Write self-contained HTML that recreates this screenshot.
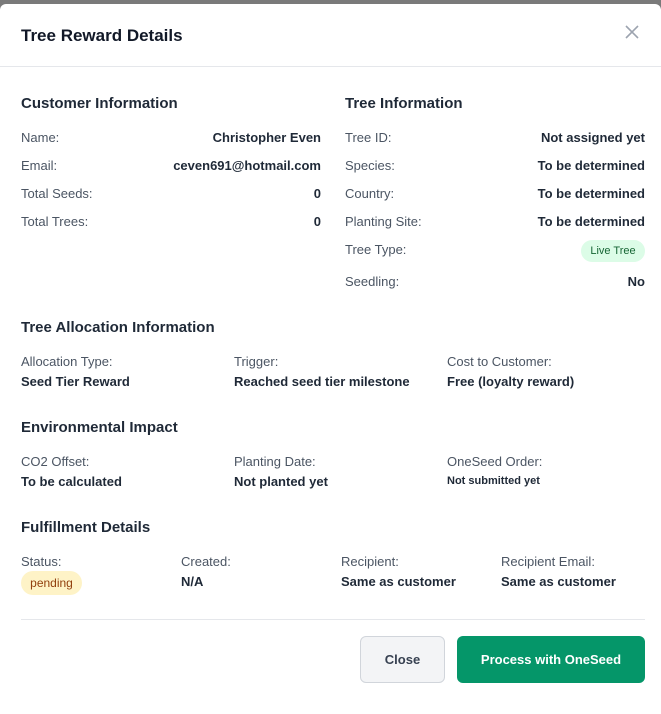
<!DOCTYPE html>
<html><head><style>
*{margin:0;padding:0;box-sizing:border-box}
body{width:661px;height:706px;background:#7a7a7a;font-family:"Liberation Sans",sans-serif;position:relative;overflow:hidden;color:#1f2937}
.m{position:absolute;left:0;top:4px;width:661px;height:710px;background:#fff;border-radius:6px 6px 0 0}
.a{position:absolute;white-space:nowrap}
.t{font-size:17px;font-weight:600;color:#111827}
.h{font-size:15px;font-weight:700;color:#1f2937}
.l{font-size:13px;color:#4b5563}
.v{font-size:13px;font-weight:700;color:#1f2937}
.r{text-align:right}
</style></head><body>
<div class="m"></div>
<div class="a t" style="left:21px;top:26px">Tree Reward Details</div>
<svg class="a" style="left:625px;top:25px" width="14" height="14" viewBox="0 0 14 14"><path d="M1 1L13 13M13 1L1 13" stroke="#9ca3af" stroke-width="1.6"/></svg>
<div class="a" style="left:0;top:66px;width:661px;height:1px;background:#e5e7eb"></div>

<div class="a h" style="left:21px;top:95px">Customer Information</div>
<div class="a h" style="left:345px;top:95px">Tree Information</div>

<div class="a l" style="left:21px;top:130px">Name:</div><div class="a v r" style="right:340px;top:130px">Christopher Even</div>
<div class="a l" style="left:21px;top:158px">Email:</div><div class="a v r" style="right:340px;top:158px">ceven691@hotmail.com</div>
<div class="a l" style="left:21px;top:186px">Total Seeds:</div><div class="a v r" style="right:340px;top:186px">0</div>
<div class="a l" style="left:21px;top:214px">Total Trees:</div><div class="a v r" style="right:340px;top:214px">0</div>

<div class="a l" style="left:345px;top:130px">Tree ID:</div><div class="a v r" style="right:16px;top:130px">Not assigned yet</div>
<div class="a l" style="left:345px;top:158px">Species:</div><div class="a v r" style="right:16px;top:158px">To be determined</div>
<div class="a l" style="left:345px;top:186px">Country:</div><div class="a v r" style="right:16px;top:186px">To be determined</div>
<div class="a l" style="left:345px;top:214px">Planting Site:</div><div class="a v r" style="right:16px;top:214px">To be determined</div>
<div class="a l" style="left:345px;top:242px">Tree Type:</div>
<div class="a" style="left:581px;top:240px;width:64px;height:22px;border-radius:11px;background:#dcfce7;color:#166534;font-size:11px;line-height:22px;text-align:center">Live Tree</div>
<div class="a l" style="left:345px;top:274px">Seedling:</div><div class="a v r" style="right:16px;top:274px">No</div>

<div class="a h" style="left:21px;top:319px">Tree Allocation Information</div>
<div class="a l" style="left:21px;top:354px">Allocation Type:</div><div class="a v" style="left:21px;top:374px">Seed Tier Reward</div>
<div class="a l" style="left:234px;top:354px">Trigger:</div><div class="a v" style="left:234px;top:374px">Reached seed tier milestone</div>
<div class="a l" style="left:447px;top:354px">Cost to Customer:</div><div class="a v" style="left:447px;top:374px">Free (loyalty reward)</div>

<div class="a h" style="left:21px;top:419px">Environmental Impact</div>
<div class="a l" style="left:21px;top:454px">CO2 Offset:</div><div class="a v" style="left:21px;top:474px">To be calculated</div>
<div class="a l" style="left:234px;top:454px">Planting Date:</div><div class="a v" style="left:234px;top:474px">Not planted yet</div>
<div class="a l" style="left:447px;top:454px">OneSeed Order:</div><div class="a v" style="left:447px;top:475px;font-size:11px">Not submitted yet</div>

<div class="a h" style="left:21px;top:519px">Fulfillment Details</div>
<div class="a l" style="left:21px;top:554px">Status:</div>
<div class="a" style="left:21px;top:571px;width:61px;height:24px;border-radius:12px;background:#fef3c7;color:#92400e;font-size:12px;line-height:24px;text-align:center">pending</div>
<div class="a l" style="left:181px;top:554px">Created:</div><div class="a v" style="left:181px;top:574px">N/A</div>
<div class="a l" style="left:341px;top:554px">Recipient:</div><div class="a v" style="left:341px;top:574px">Same as customer</div>
<div class="a l" style="left:501px;top:554px">Recipient Email:</div><div class="a v" style="left:501px;top:574px">Same as customer</div>

<div class="a" style="left:21px;top:619px;width:624px;height:1px;background:#e5e7eb"></div>
<div class="a" style="left:360px;top:636px;width:85px;height:47px;border:1px solid #d1d5db;border-radius:6px;background:#f3f4f6;font-size:13px;font-weight:700;line-height:45px;text-align:center;color:#374151">Close</div>
<div class="a" style="left:457px;top:636px;width:188px;height:47px;border-radius:6px;background:#059669;font-size:13px;font-weight:700;line-height:47px;text-align:center;color:#fff">Process with OneSeed</div>
</body></html>
